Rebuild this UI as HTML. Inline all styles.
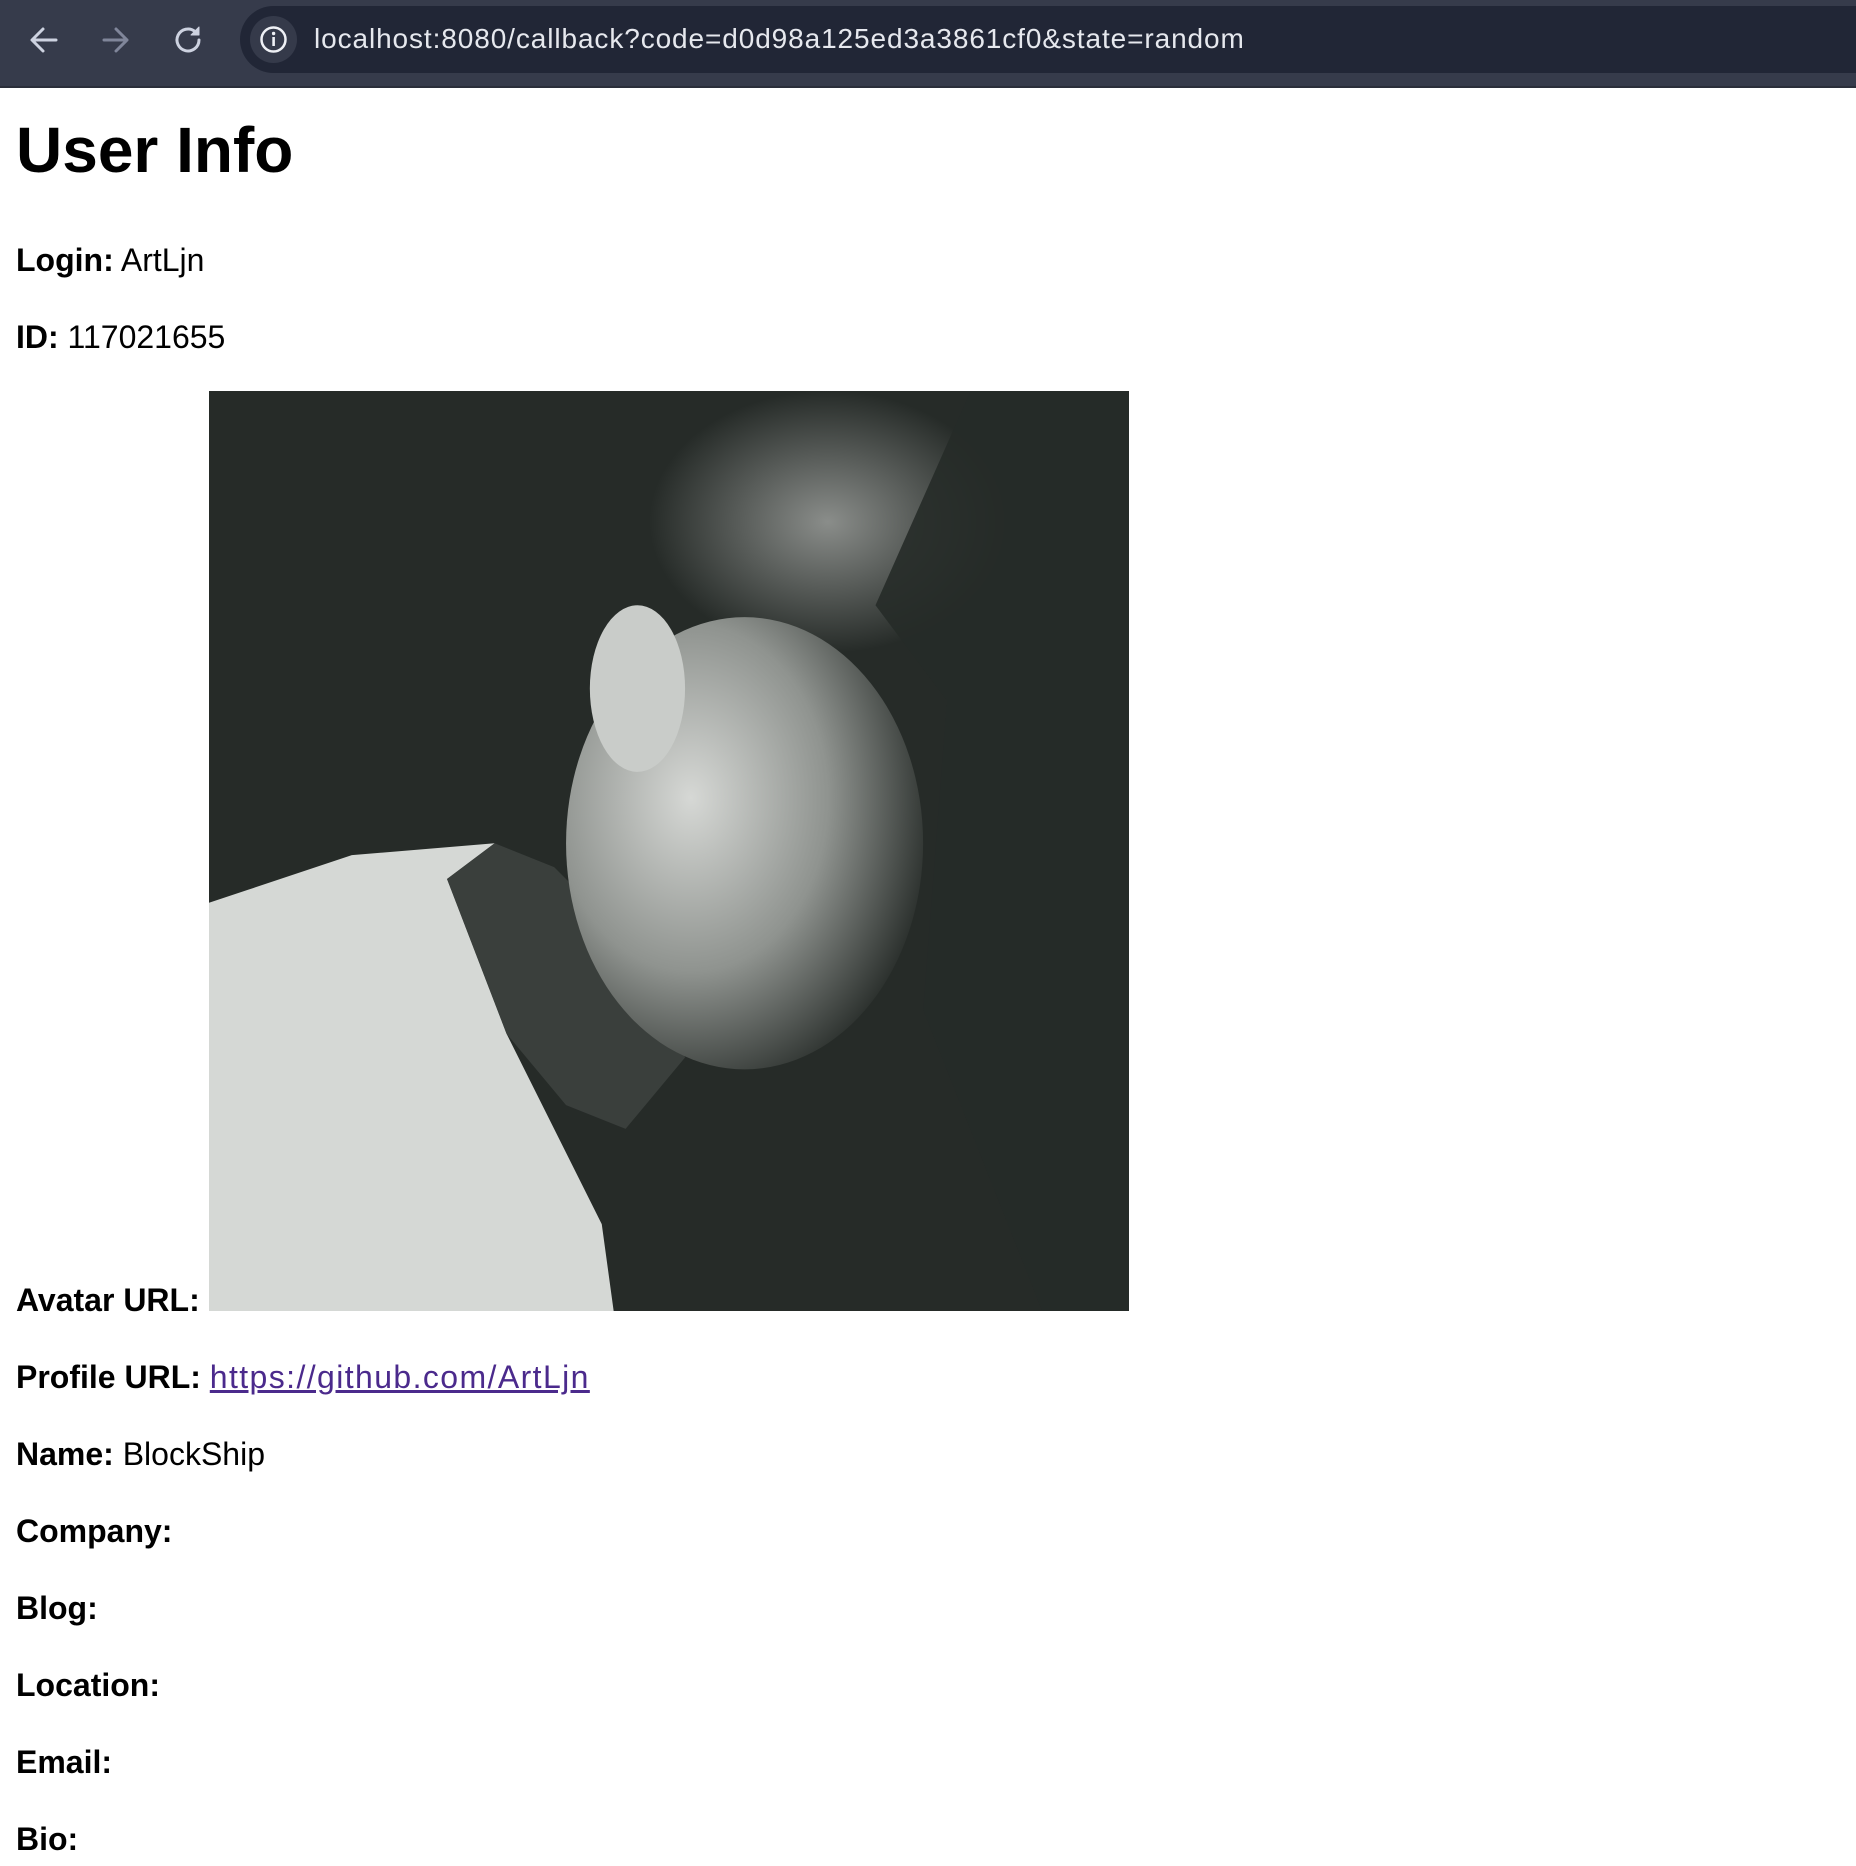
<!DOCTYPE html>
<html><head><meta charset="utf-8"><style>
html,body{margin:0;padding:0;width:1856px;height:1866px;overflow:hidden;background:#fff;font-family:"Liberation Sans",sans-serif;color:#000}
.bar{position:absolute;left:0;top:0;width:1856px;height:86px;background:#363b4b;border-bottom:2px solid #2a2e3a}
.url{position:absolute;left:240px;top:6px;width:1660px;height:67px;border-radius:34px;background:#212636}
.info{position:absolute;left:250px;top:16px;width:47px;height:47px;border-radius:50%;background:#353a4a}
.utext{position:absolute;left:314px;top:22px;font-size:28px;letter-spacing:0.9px;color:#e6e8ee;line-height:34px;white-space:nowrap}
.l{position:absolute;left:16px;font-size:32px;line-height:40px;white-space:nowrap}
b{font-weight:bold}
h1{position:absolute;left:16px;top:108px;margin:0;font-size:64px;line-height:84px;font-weight:bold}
a{color:#4b2a8c;text-decoration:underline;letter-spacing:1.4px}
</style></head><body>
<div class="bar">
<svg style="position:absolute;left:0;top:0" width="240" height="86">
<g fill="none" stroke-width="3" stroke-linecap="round" stroke-linejoin="round">
<path d="M56 40H33M43 29L32 40L43 51" stroke="#cdd2e0"/>
<path d="M104 40H127M116 29L127 40L116 51" stroke="#80869a"/>
<path d="M199 40A11 11 0 1 1 195 31.5" stroke="#cdd2e0"/>
<path d="M199 27L199 35L191 35Z" fill="#cdd2e0" stroke="#cdd2e0" stroke-width="1"/>
</g></svg>
<div class="url"></div>
<div class="info"></div>
<svg style="position:absolute;left:250px;top:16px" width="47" height="47"><circle cx="23.5" cy="23.5" r="12" fill="none" stroke="#eef0f5" stroke-width="2.5"/><rect x="22.3" y="21" width="2.6" height="9" fill="#eef0f5"/><circle cx="23.6" cy="17.5" r="1.7" fill="#eef0f5"/></svg>
<div class="utext">localhost:8080/callback?code=d0d98a125ed3a3861cf0&amp;state=random</div>
</div>
<h1>User Info</h1>
<div class="l" style="top:240px"><b>Login:</b> ArtLjn</div>
<div class="l" style="top:317px"><b>ID:</b> 117021655</div>
<svg style="position:absolute;left:209px;top:391px" width="920" height="920" viewBox="0 0 773 773">
<defs>
<radialGradient id="f" cx="0.35" cy="0.4" r="0.7"><stop offset="0" stop-color="#d6d8d5"/><stop offset="0.55" stop-color="#8f938f"/><stop offset="1" stop-color="#262b28"/></radialGradient>
<radialGradient id="h" cx="0.5" cy="0.5" r="0.5"><stop offset="0" stop-color="#8a8d8a"/><stop offset="1" stop-color="#262b28"/></radialGradient>
</defs>
<rect width="773" height="773" fill="#262b28"/>
<ellipse cx="520" cy="110" rx="150" ry="110" fill="url(#h)"/>
<path d="M0 430L120 390L240 380L200 410L250 540L330 700L340 773L0 773Z" fill="#d5d8d5"/>
<path d="M240 380L290 400L360 470L400 560L350 620L300 600L250 540L200 410Z" fill="#3a3f3c"/>
<ellipse cx="450" cy="380" rx="150" ry="190" fill="url(#f)"/>
<ellipse cx="360" cy="250" rx="40" ry="70" fill="#c9ccc9"/>
<path d="M560 180L620 260L600 520L700 773L773 773L773 0L640 0Z" fill="#262b28" opacity="0.9"/>
</svg>
<div class="l" style="top:1280px"><b>Avatar URL:</b></div>
<div class="l" style="top:1357px"><b>Profile URL:</b> <a>https://github.com/ArtLjn</a></div>
<div class="l" style="top:1434px"><b>Name:</b> BlockShip</div>
<div class="l" style="top:1511px"><b>Company:</b></div>
<div class="l" style="top:1588px"><b>Blog:</b></div>
<div class="l" style="top:1665px"><b>Location:</b></div>
<div class="l" style="top:1742px"><b>Email:</b></div>
<div class="l" style="top:1819px"><b>Bio:</b></div>
</body></html>
